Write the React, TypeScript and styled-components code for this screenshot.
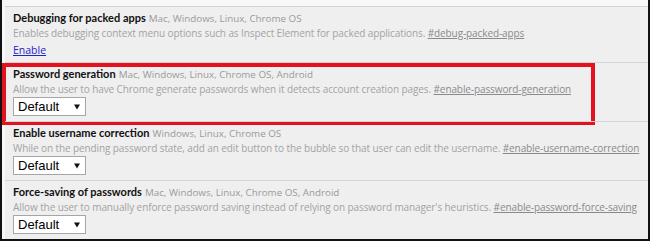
import React from 'react';
import styled, { createGlobalStyle } from 'styled-components';

const GlobalStyle = createGlobalStyle`
  html, body {
    margin: 0;
    padding: 0;
    background: #ffffff;
  }
  body {
    font-family: 'Open Sans', 'Noto Sans', sans-serif;
  }
`;

const Frame = styled.div`
  width: 650px;
  height: 241px;
  box-sizing: border-box;
  border: 2px solid #111;
  border-top: none;
  padding-left: 3px;
  padding-top: 6px;
  background: #f7f7f7;
  overflow: hidden;
`;

const List = styled.div`
  background: #efefef;
  height: 100%;
`;

const Experiment = styled.div<{ $compact?: boolean }>`
  position: relative;
  border-top: 1px solid #d4d4d4;
  padding: 3px 0 ${(p) => (p.$compact ? '4px' : '5px')} 8px;
`;

const Highlight = styled.div`
  position: absolute;
  left: -3px;
  top: 0;
  width: 593px;
  height: 62px;
  border: 4px solid #e3121f;
  box-sizing: border-box;
  pointer-events: none;
`;

const TitleLine = styled.div`
  display: flex;
  align-items: baseline;
  gap: 3px;
  height: 16px;
  line-height: 16px;
  white-space: nowrap;
`;

const Name = styled.span`
  font-family: Lato, 'Open Sans', sans-serif;
  font-weight: 700;
  font-size: 11px;
  color: #111;
`;

const Platforms = styled.span`
  font-size: 9.8px;
  color: #9a9a9a;
`;

const Description = styled.div`
  height: 15px;
  font-size: 10px;
  letter-spacing: -0.1px;
  line-height: 15px;
  color: #a3a3a3;
  white-space: nowrap;
`;

const Permalink = styled.a`
  color: #8a8a8a;
  text-decoration: underline;
`;

const ActionLink = styled.a`
  display: block;
  width: fit-content;
  margin-top: 2px;
  font-size: 10.5px;
  line-height: 15px;
  color: #2222cc;
  text-decoration: underline;
`;

const SelectBox = styled.div`
  display: flex;
  align-items: center;
  justify-content: space-between;
  width: 73px;
  height: 19px;
  box-sizing: border-box;
  padding: 0 5px 0 4px;
  background: #fff;
  border: 1px solid #a6a6a6;
  font-family: 'Liberation Sans', Arial, sans-serif;
  font-size: 13px;
  color: #000;
`;

const Arrow = () => (
  <svg width="6" height="6" viewBox="0 0 6 6">
    <path d="M0 0.5 L6 0.5 L3 5.5 Z" fill="#111" />
  </svg>
);

type Flag = {
  name: string;
  platforms: string;
  description: string;
  link: string;
  action: 'enable' | 'select';
  highlight?: boolean;
};

const flags: Flag[] = [
  {
    name: 'Debugging for packed apps',
    platforms: 'Mac, Windows, Linux, Chrome OS',
    description: 'Enables debugging context menu options such as Inspect Element for packed applications.',
    link: '#debug-packed-apps',
    action: 'enable',
  },
  {
    name: 'Password generation',
    platforms: 'Mac, Windows, Linux, Chrome OS, Android',
    description: 'Allow the user to have Chrome generate passwords when it detects account creation pages.',
    link: '#enable-password-generation',
    action: 'select',
    highlight: true,
  },
  {
    name: 'Enable username correction',
    platforms: 'Windows, Linux, Chrome OS',
    description: 'While on the pending password state, add an edit button to the bubble so that user can edit the username.',
    link: '#enable-username-correction',
    action: 'select',
  },
  {
    name: 'Force-saving of passwords',
    platforms: 'Mac, Windows, Linux, Chrome OS, Android',
    description: "Allow the user to manually enforce password saving instead of relying on password manager's heuristics.",
    link: '#enable-password-force-saving',
    action: 'select',
  },
];

const App: React.FC = () => {
  return (
    <>
      <GlobalStyle />
      <Frame>
        <List>
          {flags.map((f) => (
            <Experiment key={f.link} $compact={f.action === 'enable'}>
              {f.highlight && <Highlight />}
              <TitleLine>
                <Name>{f.name}</Name>
                <Platforms>{f.platforms}</Platforms>
              </TitleLine>
              <Description>
                {f.description} <Permalink>{f.link}</Permalink>
              </Description>
              {f.action === 'enable' ? (
                <ActionLink>Enable</ActionLink>
              ) : (
                <SelectBox>
                  Default <Arrow />
                </SelectBox>
              )}
            </Experiment>
          ))}
        </List>
      </Frame>
    </>
  );
};

export default App;
